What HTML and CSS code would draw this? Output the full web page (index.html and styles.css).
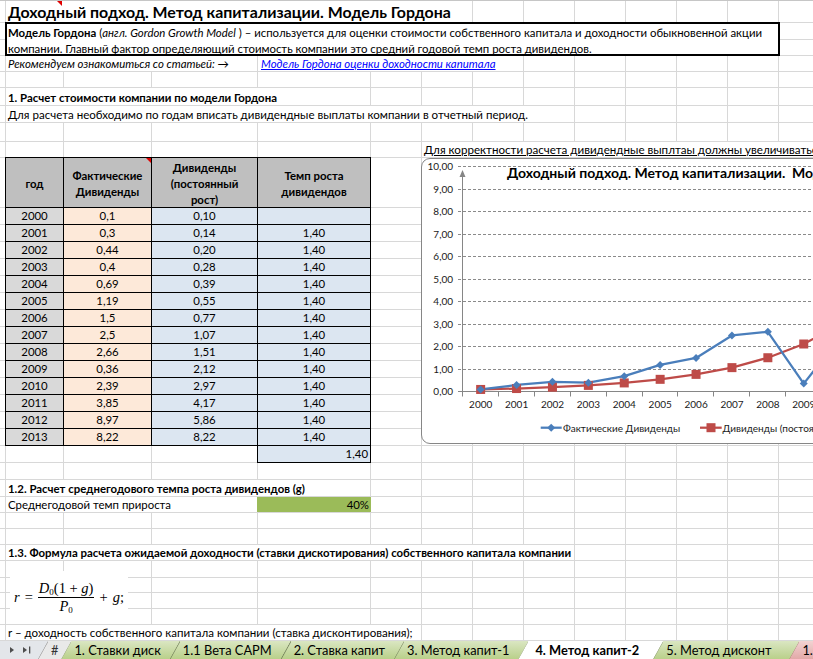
FILE: index.html
```html
<!DOCTYPE html>
<html lang="ru">
<head>
<meta charset="utf-8">
<title>Модель Гордона</title>
<link rel="stylesheet" href="styles.css">
</head>
<body>
<div class="window">
<div class="sheet">
  <div class="row h22">
    <div class="cell title span-b-g"><span class="ind ind-title"></span>Доходный подход. Метод капитализации. Модель Гордона</div>
  </div>
  <div class="row h33 twin">
    <div class="box"><b>Модель Гордона</b> (<i>англ. Gordon Growth Model</i> ) – используется для оценки стоимости собственного капитала и доходности обыкновенной акции<br>компании. Главный фактор определяющий стоимость компании это средний годовой темп роста дивидендов.</div>
  </div>
  <div class="row h16">
    <div class="cell it span-b-d">Рекомендуем ознакомиться со статьей: →</div>
    <div class="cell link span-e-h">Модель Гордона оценки доходности капитала</div>
  </div>
  <div class="row h16"></div>
  <div class="row h18">
    <div class="cell sub span-b-e">1. Расчет стоимости компании по модели Гордона</div>
  </div>
  <div class="row h17">
    <div class="cell body span-b-i">Для расчета необходимо по годам вписать дивидендные выплаты компании в отчетный период.</div>
  </div>
  <div class="row h19"></div>
  <div class="row h16">
    <div class="cell note span-g-o">Для корректности расчета дивидендные выплтаы должны увеличиваться</div>
  </div>
  <div class="row h50">
    <div class="tb hd first">год</div>
    <div class="tb hd"><span class="ind"></span>Фактические<br>Дивиденды</div>
    <div class="tb hd">Дивиденды<br>(постоянный<br>рост)</div>
    <div class="tb hd">Темп роста<br>дивидендов</div>
  </div>
  <div class="row h17"><div class="tb yr first">2000</div><div class="tb act">0,1</div><div class="tb cst">0,10</div><div class="tb cst"></div></div>
  <div class="row h17"><div class="tb yr first">2001</div><div class="tb act">0,3</div><div class="tb cst">0,14</div><div class="tb cst">1,40</div></div>
  <div class="row h17"><div class="tb yr first">2002</div><div class="tb act">0,44</div><div class="tb cst">0,20</div><div class="tb cst">1,40</div></div>
  <div class="row h17"><div class="tb yr first">2003</div><div class="tb act">0,4</div><div class="tb cst">0,28</div><div class="tb cst">1,40</div></div>
  <div class="row h17"><div class="tb yr first">2004</div><div class="tb act">0,69</div><div class="tb cst">0,39</div><div class="tb cst">1,40</div></div>
  <div class="row h17"><div class="tb yr first">2005</div><div class="tb act">1,19</div><div class="tb cst">0,55</div><div class="tb cst">1,40</div></div>
  <div class="row h17"><div class="tb yr first">2006</div><div class="tb act">1,5</div><div class="tb cst">0,77</div><div class="tb cst">1,40</div></div>
  <div class="row h17"><div class="tb yr first">2007</div><div class="tb act">2,5</div><div class="tb cst">1,07</div><div class="tb cst">1,40</div></div>
  <div class="row h17"><div class="tb yr first">2008</div><div class="tb act">2,66</div><div class="tb cst">1,51</div><div class="tb cst">1,40</div></div>
  <div class="row h17"><div class="tb yr first">2009</div><div class="tb act">0,36</div><div class="tb cst">2,12</div><div class="tb cst">1,40</div></div>
  <div class="row h17"><div class="tb yr first">2010</div><div class="tb act">2,39</div><div class="tb cst">2,97</div><div class="tb cst">1,40</div></div>
  <div class="row h17"><div class="tb yr first">2011</div><div class="tb act">3,85</div><div class="tb cst">4,17</div><div class="tb cst">1,40</div></div>
  <div class="row h17"><div class="tb yr first">2012</div><div class="tb act">8,97</div><div class="tb cst">5,86</div><div class="tb cst">1,40</div></div>
  <div class="row h17"><div class="tb yr first">2013</div><div class="tb act">8,22</div><div class="tb cst">8,22</div><div class="tb cst">1,40</div></div>
  <div class="row h17"><div class="tb cst total">1,40</div></div>
  <div class="row h17"></div>
  <div class="row h17">
    <div class="cell sub span-b-e">1.2. Расчет среднегодового темпа роста дивидендов (g)</div>
  </div>
  <div class="row h16">
    <div class="cell span-b-d">Среднегодовой темп прироста</div>
    <div class="cell green">40%</div>
  </div>
  <div class="row h16"></div>
  <div class="row h16"></div>
  <div class="row h16">
    <div class="cell sub span-b-i">1.3. Формула расчета ожидаемой доходности (ставки дискотирования) собственного капитала компании</div>
  </div>
  <div class="row h17"></div>
  <div class="row h15"></div>
  <div class="row h16"></div>
  <div class="row h16"></div>
  <div class="row h16">
    <div class="cell body span-b-f">r – доходность собственного капитала компании (ставка дисконтирования);</div>
  </div>

  <div class="formula">
    <span class="mi">r</span><span class="mo">=</span><span class="frac"><span class="num"><span class="mi">D</span><sub>0</sub>(1 + <span class="mi">g</span>)</span><span class="den"><span class="mi">P</span><sub>0</sub></span></span><span class="mo">+</span><span class="mi">g</span>;
  </div>

  <div class="chart">
    <svg class="chart-svg" width="480" height="284" viewBox="0 0 480 284" xmlns="http://www.w3.org/2000/svg">
      <g class="grid" stroke="#8a8a8a" stroke-width="1" stroke-dasharray="3 2" fill="none">
        <line x1="36" y1="7.5" x2="480" y2="7.5"/>
        <line x1="36" y1="30.5" x2="480" y2="30.5"/>
        <line x1="36" y1="52.5" x2="480" y2="52.5"/>
        <line x1="36" y1="75.5" x2="480" y2="75.5"/>
        <line x1="36" y1="97.5" x2="480" y2="97.5"/>
        <line x1="36" y1="120.5" x2="480" y2="120.5"/>
        <line x1="36" y1="142.5" x2="480" y2="142.5"/>
        <line x1="36" y1="165.5" x2="480" y2="165.5"/>
        <line x1="36" y1="187.5" x2="480" y2="187.5"/>
        <line x1="36" y1="210.5" x2="480" y2="210.5"/>
      </g>
      <g stroke="#868686" stroke-width="1" fill="none">
        <line x1="36" y1="232.5" x2="480" y2="232.5"/>
        <line x1="40.5" y1="232.5" x2="40.5" y2="15"/>
        <line x1="40.5" y1="232.5" x2="40.5" y2="237.5"/>
        <line x1="76.5" y1="232.5" x2="76.5" y2="237.5"/>
        <line x1="112.5" y1="232.5" x2="112.5" y2="237.5"/>
        <line x1="148.5" y1="232.5" x2="148.5" y2="237.5"/>
        <line x1="184.5" y1="232.5" x2="184.5" y2="237.5"/>
        <line x1="220.5" y1="232.5" x2="220.5" y2="237.5"/>
        <line x1="255.5" y1="232.5" x2="255.5" y2="237.5"/>
        <line x1="291.5" y1="232.5" x2="291.5" y2="237.5"/>
        <line x1="327.5" y1="232.5" x2="327.5" y2="237.5"/>
        <line x1="363.5" y1="232.5" x2="363.5" y2="237.5"/>
        <line x1="399.5" y1="232.5" x2="399.5" y2="237.5"/>
        <line x1="435.5" y1="232.5" x2="435.5" y2="237.5"/>
        <line x1="471.5" y1="232.5" x2="471.5" y2="237.5"/>
      </g>
      <polygon points="40.5,11 37.5,18 43.5,18" fill="#868686"/>
      <g class="ylab" text-anchor="end">
        <text x="31" y="11">10,00</text>
        <text x="31" y="34">9,00</text>
        <text x="31" y="56">8,00</text>
        <text x="31" y="79">7,00</text>
        <text x="31" y="101">6,00</text>
        <text x="31" y="124">5,00</text>
        <text x="31" y="146">4,00</text>
        <text x="31" y="169">3,00</text>
        <text x="31" y="191">2,00</text>
        <text x="31" y="214">1,00</text>
        <text x="31" y="236">0,00</text>
      </g>
      <g class="xlab" text-anchor="middle">
        <text x="58.7" y="249">2000</text>
        <text x="94.6" y="249">2001</text>
        <text x="130.5" y="249">2002</text>
        <text x="166.4" y="249">2003</text>
        <text x="202.3" y="249">2004</text>
        <text x="238.2" y="249">2005</text>
        <text x="274.1" y="249">2006</text>
        <text x="310" y="249">2007</text>
        <text x="345.9" y="249">2008</text>
        <text x="381.8" y="249">2009</text>
        <text x="417.7" y="249">2010</text>
        <text x="453.6" y="249">2011</text>
      </g>
      <text class="ctitle" x="85" y="19">Доходный подход. Метод капитализации.&#160; Модель Гордона</text>
      <polyline fill="none" stroke="#be4b48" stroke-width="2.25" stroke-linejoin="round" points="58.65,230.45 94.55,229.55 130.45,228.2 166.35,226.4 202.25,223.93 238.15,220.33 274.05,215.38 309.95,208.63 345.85,198.73 381.75,185 417.65,165.88 453.55,138.88 489.45,100.85"/>
      <polyline fill="none" stroke="#4a7ebb" stroke-width="2.25" stroke-linejoin="round" points="58.65,230.45 94.55,225.95 130.45,222.8 166.35,223.7 202.25,217.18 238.15,205.93 274.05,198.95 309.95,176.45 345.85,172.85 381.75,224.6 417.65,178.93 453.55,146.08 489.45,30.87"/>
      <g fill="#be4b48">
        <rect x="54.15" y="225.95" width="9" height="9"/>
        <rect x="90.05" y="225.05" width="9" height="9"/>
        <rect x="125.95" y="223.7" width="9" height="9"/>
        <rect x="161.85" y="221.9" width="9" height="9"/>
        <rect x="197.75" y="219.43" width="9" height="9"/>
        <rect x="233.65" y="215.83" width="9" height="9"/>
        <rect x="269.55" y="210.88" width="9" height="9"/>
        <rect x="305.45" y="204.13" width="9" height="9"/>
        <rect x="341.35" y="194.23" width="9" height="9"/>
        <rect x="377.25" y="180.5" width="9" height="9"/>
        <rect x="413.15" y="161.38" width="9" height="9"/>
      </g>
      <g fill="#4a7ebb">
        <polygon points="58.65,226.45 62.65,230.45 58.65,234.45 54.65,230.45"/>
        <polygon points="94.55,221.95 98.55,225.95 94.55,229.95 90.55,225.95"/>
        <polygon points="130.45,218.8 134.45,222.8 130.45,226.8 126.45,222.8"/>
        <polygon points="166.35,219.7 170.35,223.7 166.35,227.7 162.35,223.7"/>
        <polygon points="202.25,213.18 206.25,217.18 202.25,221.18 198.25,217.18"/>
        <polygon points="238.15,201.93 242.15,205.93 238.15,209.93 234.15,205.93"/>
        <polygon points="274.05,194.95 278.05,198.95 274.05,202.95 270.05,198.95"/>
        <polygon points="309.95,172.45 313.95,176.45 309.95,180.45 305.95,176.45"/>
        <polygon points="345.85,168.85 349.85,172.85 345.85,176.85 341.85,172.85"/>
        <polygon points="381.75,220.6 385.75,224.6 381.75,228.6 377.75,224.6"/>
        <polygon points="417.65,174.93 421.65,178.93 417.65,182.93 413.65,178.93"/>
      </g>
      <g class="legend">
        <line x1="118.7" y1="268.7" x2="139.7" y2="268.7" stroke="#4a7ebb" stroke-width="2.25"/>
        <polygon points="129.2,264.7 133.2,268.7 129.2,272.7 125.2,268.7" fill="#4a7ebb"/>
        <text x="141" y="272.5">Фактические Дивиденды</text>
        <line x1="278" y1="268.7" x2="299.7" y2="268.7" stroke="#be4b48" stroke-width="2.25"/>
        <rect x="284.5" y="264.2" width="9" height="9" fill="#be4b48"/>
        <text x="300.5" y="272.5">Дивиденды (постоянный рост)</text>
      </g>
    </svg>
  </div>
</div>

<div class="tabbar">
  <div class="nav">
    <svg width="34" height="18" viewBox="0 0 34 18" xmlns="http://www.w3.org/2000/svg">
      <polygon points="10,6 14,9 10,12" fill="#4d4d4d"/>
      <polygon points="23,6 27,9 23,12" fill="#4d4d4d"/>
      <rect x="29" y="5.5" width="1.3" height="7" fill="#4d4d4d"/>
    </svg>
  </div>
  <div class="tab t-hash">#</div>
  <div class="tab t-green">1. Ставки диск</div>
  <div class="tab t-green">1.1 Вета CAPM</div>
  <div class="tab t-green">2. Ставка капит</div>
  <div class="tab t-green">3. Метод капит-1</div>
  <div class="tab t-active">4. Метод капит-2</div>
  <div class="tab t-green t-wide">5. Метод дисконт</div>
  <div class="tab t-red">1. Модель</div>
</div>
</div>
</body>
</html>
```
FILE: styles.css
```css
html, body {
  margin: 0;
  padding: 0;
}
body {
  width: 813px;
  height: 659px;
  overflow: hidden;
  background: #fff;
  font-family: Lato, "Noto Sans", sans-serif;
  font-size: 11.4px;
  color: #000;
}
.window {
  width: 813px;
  height: 659px;
  overflow: hidden;
  position: relative;
}
.sheet {
  position: relative;
  width: 880px;
  border-top: 1px solid #c6c6c6;
  background-color: #fff;
  background-image:
    linear-gradient(#d8d8d8, #d8d8d8), linear-gradient(#d8d8d8, #d8d8d8),
    linear-gradient(#d8d8d8, #d8d8d8), linear-gradient(#d8d8d8, #d8d8d8),
    linear-gradient(#d8d8d8, #d8d8d8), linear-gradient(#d8d8d8, #d8d8d8),
    linear-gradient(#d8d8d8, #d8d8d8), linear-gradient(#d8d8d8, #d8d8d8),
    linear-gradient(#d8d8d8, #d8d8d8), linear-gradient(#d8d8d8, #d8d8d8),
    linear-gradient(#d8d8d8, #d8d8d8), linear-gradient(#d8d8d8, #d8d8d8),
    linear-gradient(#d8d8d8, #d8d8d8), linear-gradient(#d8d8d8, #d8d8d8);
  background-size: 1px 100%;
  background-repeat: no-repeat;
  background-position: 5px 0, 63px 0, 151px 0, 257px 0, 370px 0, 421px 0, 472px 0,
    523px 0, 574px 0, 625px 0, 676px 0, 727px 0, 778px 0, 829px 0;
}
.row {
  display: grid;
  grid-template-columns: 6px 58px 88px 106px 113px repeat(10, 51px);
  grid-template-rows: minmax(0, 1fr);
  box-sizing: border-box;
  border-bottom: 1px solid #d8d8d8;
  height: 17px;
}
.h15 { height: 15px; }
.h16 { height: 16px; }
.h17 { height: 17px; }
.h18 { height: 18px; }
.h19 { height: 19px; }
.h22 { height: 22px; }
.h33 { height: 33px; }
.h50 { height: 50px; }
.twin {
  background: linear-gradient(#d8d8d8, #d8d8d8) 0 16px / 100% 1px no-repeat;
}

.cell {
  background: #fff;
  margin-right: 1px;
  padding-left: 2px;
  white-space: nowrap;
  overflow: hidden;
  display: flex;
  align-items: flex-end;
  line-height: 15px;
  position: relative;
}
.cell.body { font-size: 11.55px; }
.span-b-g { grid-column: 2 / 8; }
.span-b-d { grid-column: 2 / 5; }
.span-e-h { grid-column: 5 / 9; }
.span-b-e { grid-column: 2 / 6; }
.span-b-i { grid-column: 2 / 10; }
.span-b-f { grid-column: 2 / 7; }
.span-g-o { grid-column: 7 / 16; }

.title {
  font-size: 15.9px;
  font-weight: 700;
  align-items: center;
  overflow: visible;
}
.sub { font-weight: 700; }
.it { font-style: italic; }
.link {
  font-style: italic;
  color: #0000ff;
  text-decoration: underline;
  padding-left: 3px;
}
.note {
  text-decoration: underline;
  padding-left: 2px;
  font-size: 11.6px;
}
.box {
  grid-column: 2 / 14;
  margin: -1px -1px -1px -1px;
  border: 2px solid #000;
  background: #fff;
  padding: 1px 0 0 1px;
  line-height: 16px;
  white-space: nowrap;
  overflow: hidden;
}
.box i { font-style: italic; }

.ind {
  position: absolute;
  top: 0;
  right: 0;
  width: 0;
  height: 0;
  border-top: 5px solid #e00000;
  border-left: 5px solid transparent;
}
.ind-title {
  right: auto;
  left: 51px;
}

.tb {
  border-right: 1px solid #000;
  border-bottom: 1px solid #000;
  margin-bottom: -1px;
  display: flex;
  align-items: center;
  justify-content: center;
  text-align: center;
  line-height: 16px;
  position: relative;
}
.tb.first {
  grid-column: 2;
  margin-left: -1px;
  border-left: 1px solid #000;
}
.hd {
  background: #bfbfbf;
  font-weight: 700;
  margin-top: -1px;
  border-top: 1px solid #000;
  padding-top: 2px;
}
.yr { background: #d9d9d9; }
.act { background: #fde9d9; }
.cst { background: #dce6f1; }
.total {
  grid-column: 5;
  margin-left: -1px;
  border-left: 1px solid #000;
  justify-content: flex-end;
  padding-right: 2px;
}
.green {
  grid-column: 5;
  background: #9bbb59;
  margin-left: -1px;
  margin-right: 0;
  justify-content: flex-end;
  padding-right: 2px;
}

.formula {
  position: absolute;
  left: 10px;
  top: 570px;
  width: 118px;
  height: 53px;
  background: #fff;
  display: flex;
  align-items: center;
  padding-left: 4px;
  box-sizing: border-box;
  white-space: nowrap;
  font-family: "Liberation Serif", "DejaVu Serif", serif;
  font-size: 14.5px;
}
.formula .mi { font-style: italic; }
.formula .mo { margin: 0 5px; }
.formula sub { font-size: 9px; vertical-align: -2px; line-height: 0; }
.frac {
  display: inline-flex;
  flex-direction: column;
  align-items: center;
  line-height: 15px;
}
.num {
  padding: 0 1px 1px;
  border-bottom: 1px solid #000;
}
.den { padding-top: 1px; }

.chart {
  position: absolute;
  left: 421px;
  top: 157px;
  width: 480px;
  height: 286px;
  box-sizing: border-box;
  border: 1px solid #868686;
  border-radius: 9px;
  background: #fff;
  overflow: hidden;
}
.chart-svg { display: block; }
.chart-svg text {
  font-family: Lato, "Noto Sans", sans-serif;
  font-size: 10px;
  fill: #1a1a1a;
}
.chart-svg .ctitle {
  font-size: 14px;
  font-weight: 700;
  fill: #000;
}

.tabbar {
  height: 18px;
  background: #e3e6ea;
  display: flex;
  align-items: stretch;
  white-space: nowrap;
}
.nav {
  width: 34px;
  flex: none;
}
.nav svg { display: block; }
.tab {
  flex: none;
  margin-left: -10px;
  padding: 0 19px 0 13px;
  display: flex;
  align-items: center;
  font-size: 12.8px;
  clip-path: polygon(0 100%, 10px 0, 100% 0, 100% 100%);
  background-repeat: no-repeat;
}
.t-hash {
  margin-left: 4px;
  padding: 0 13px 0 13px;
  background: linear-gradient(to bottom right, transparent calc(50% - 1px), #8d8d8d 50%, transparent calc(50% + 1px)) 0 0 / 10px 100% no-repeat, #e9e9e9;
  color: #333;
}
.t-green {
  background: linear-gradient(to bottom right, transparent calc(50% - 1px), #6f7d57 50%, transparent calc(50% + 1px)) 0 0 / 10px 100% no-repeat, linear-gradient(#dae6c2, #b9d08a);
}
.t-wide { padding-right: 28px; }
.t-active {
  background: linear-gradient(to bottom right, transparent calc(50% - 1px), #6f7d57 50%, transparent calc(50% + 1px)) 0 0 / 10px 100% no-repeat, #fff;
  font-weight: 700;
  padding: 0 24px 0 17px;
}
.t-red {
  background: linear-gradient(to bottom right, transparent calc(50% - 1px), #8a5a5a 50%, transparent calc(50% + 1px)) 0 0 / 10px 100% no-repeat, linear-gradient(#f2d3d2, #e2a9a8);
}
```
